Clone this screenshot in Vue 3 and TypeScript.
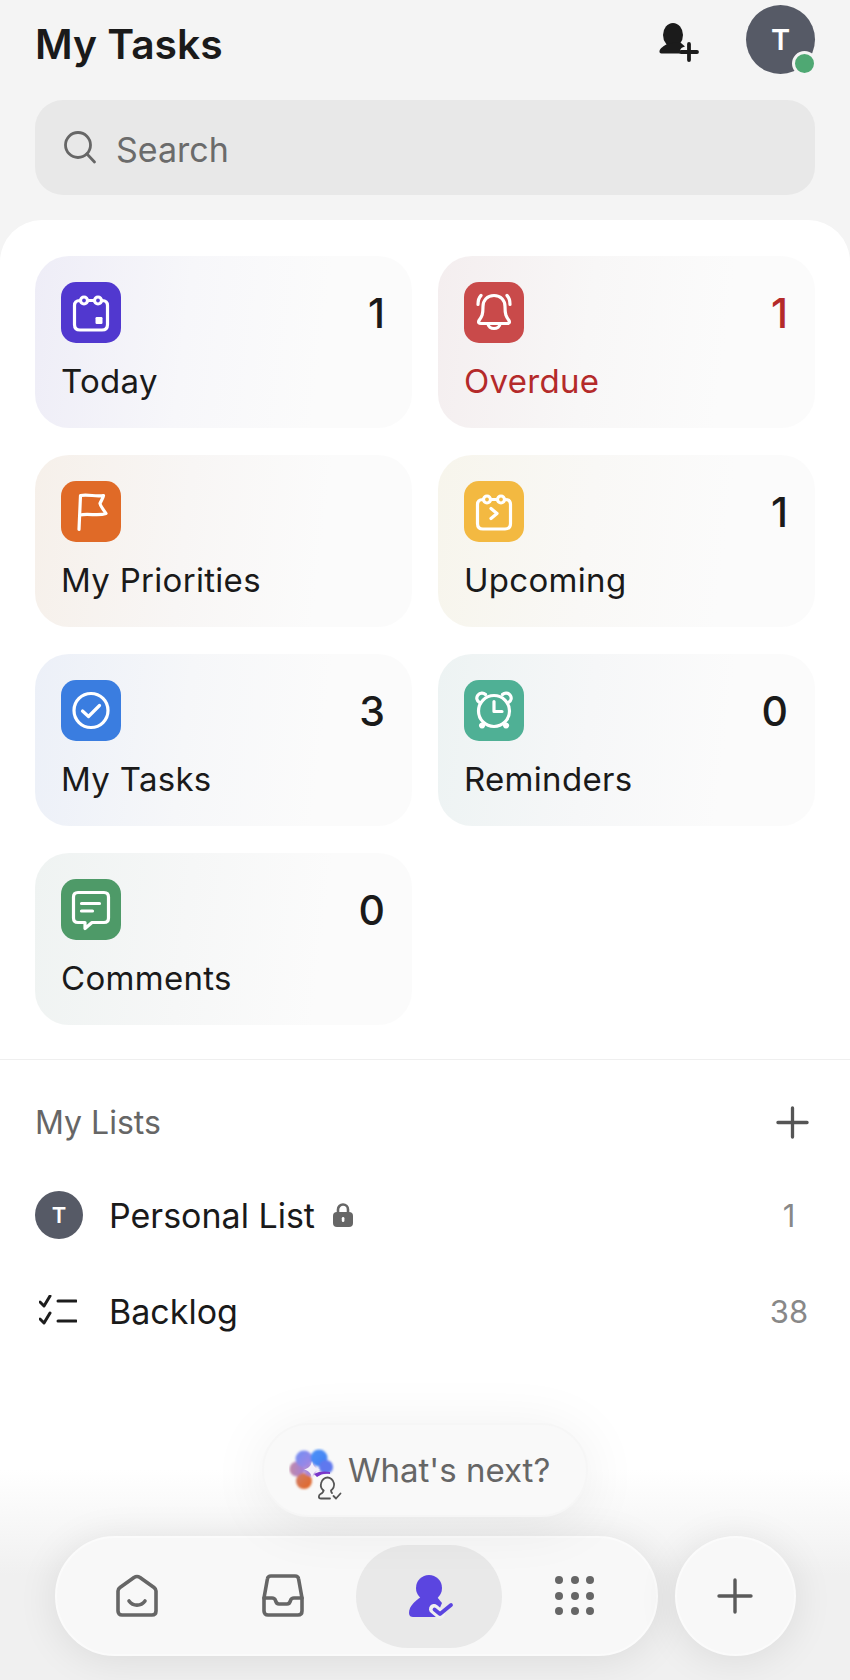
<template>
  <div class="page">
    <header class="top">
      <h1 class="title">My Tasks</h1>
      <svg class="add-user" viewBox="0 0 40 40" aria-hidden="true">
        <ellipse cx="14" cy="12" rx="10" ry="12" fill="#1b1b1b" />
        <path d="M8 21c-3 2-7 4-7.500 7-.3 1.500.5 2.500 2 2.500H21c-.5-4 1-6 5-7l-4-3.500-3-1z" fill="#1b1b1b" />
        <path d="M30 21v16M22 29h16" stroke="#1b1b1b" stroke-width="3.800" stroke-linecap="round" fill="none" />
      </svg>
      <div class="avatar">
        T
        <span class="status"></span>
      </div>
    </header>

    <div class="search">
      <svg class="search-icon" viewBox="0 0 34 34" aria-hidden="true">
        <circle cx="15" cy="14" r="12.500" />
        <path d="M24 23l7.500 8" />
      </svg>
      <span>Search</span>
    </div>

    <main class="sheet">
      <section class="cards">
        <article v-for="card in cards" :key="card.label" class="card" :class="[card.tint, { danger: card.danger }]">
          <div class="card-top">
            <div class="tile" :style="{ background: card.color }">
              <svg viewBox="0 0 60 60" aria-hidden="true">
                <path v-for="d in card.lines" :key="d" :d="d" />
                <rect v-if="card.dot" x="34.500" y="34.500" width="7" height="7" rx="1.200" class="dot" />
              </svg>
            </div>
            <span v-if="card.count !== null" class="count">{{ card.count }}</span>
          </div>
          <div class="label">{{ card.label }}</div>
        </article>
      </section>

      <section class="lists">
        <div class="lists-head">
          <span>My Lists</span>
          <svg class="lists-plus" viewBox="0 0 34 34" aria-hidden="true">
            <path d="M17 2v30M2 17h30" />
          </svg>
        </div>
        <div class="row">
          <div class="row-lead"><span class="mini-avatar">T</span></div>
          <span class="row-name">Personal List</span>
          <svg class="lock" viewBox="0 0 22 26" aria-hidden="true">
            <path d="M6 11V7.500a5 5 0 0 1 10 0V11" fill="none" stroke="#666" stroke-width="2.600" />
            <rect x="1" y="10" width="20" height="15" rx="4" fill="#666" />
            <rect x="9.800" y="15" width="2.600" height="5" rx="1.300" fill="#fff" />
          </svg>
          <span class="row-count">1</span>
        </div>
        <div class="row">
          <div class="row-lead">
            <svg class="checklist" viewBox="0 0 38 32" aria-hidden="true">
              <path d="M1 7l4 4 6-10M1 24l4 4 6-10" />
              <path d="M19 6h18M19 26h18" />
            </svg>
          </div>
          <span class="row-name">Backlog</span>
          <span class="row-count">38</span>
        </div>
      </section>
    </main>

    <div class="fade"></div>

    <div class="dock">
      <div class="ask">
        <svg class="ask-icon" viewBox="0 0 46 44" aria-hidden="true">
          <defs>
            <linearGradient id="blobLeft" x1="0" y1="0" x2="1" y2="1">
              <stop offset="0" stop-color="#6f8ff5" />
              <stop offset="1" stop-color="#a884e0" />
            </linearGradient>
            <linearGradient id="blobRight" x1="0" y1="0" x2="1" y2="1">
              <stop offset="0" stop-color="#4f93f8" />
              <stop offset="1" stop-color="#3f7ff2" />
            </linearGradient>
            <linearGradient id="blobWarm" x1="0" y1="0" x2="1" y2="1">
              <stop offset="0" stop-color="#cf7f6c" />
              <stop offset="1" stop-color="#e4641f" />
            </linearGradient>
            <linearGradient id="blobPink" x1="0" y1="0" x2="1" y2="0">
              <stop offset="0" stop-color="#c08aa8" />
              <stop offset="1" stop-color="#a57fd6" />
            </linearGradient>
            <filter id="soft" x="-20%" y="-20%" width="140%" height="140%"><feGaussianBlur stdDeviation="1.100" /></filter>
          </defs>
          <g filter="url(#soft)">
            <circle cx="8" cy="21" r="7.500" fill="url(#blobPink)" />
            <circle cx="15" cy="11" r="8.500" fill="url(#blobLeft)" />
            <circle cx="30" cy="10" r="8.500" fill="url(#blobRight)" />
            <circle cx="37" cy="19" r="7" fill="#5f78ee" />
            <circle cx="15" cy="33" r="8" fill="url(#blobWarm)" />
            <circle cx="21" cy="22" r="6" fill="#a98ad8" />
          </g>
          <path d="M25 26c5-3 11-3 16-2v2c-5-1-9 0-13 3z" fill="#7a35c9" />
          <path d="M23 13c1 5 3 7 8 8.500-5 1.500-7 3.500-8 8.500-1-5-3-7-8-8.500 5-1.500 7-3.500 8-8.500z" fill="#f3effa" />
        </svg>
        <svg class="ask-badge" viewBox="0 0 24 24" aria-hidden="true">
          <circle cx="10" cy="11" r="13" fill="#f9f9f9" />
          <path d="M6.500 14.500C4 12.500 3.500 10 4 7.500 4.700 3.500 8 1.500 10.500 1.500S16.300 3.500 17 7.500c.4 2.500-.5 5-3 7 0 1.500.5 2 1 2.500" />
          <path d="M6.500 14.500c0 1.500-1 2.500-3 3.500-2 1.200-2.500 4.500.5 4.500h9" />
          <path d="M16.500 20l2.500 2.500 4.500-5" />
        </svg>
        <span>What's next?</span>
      </div>

      <div class="dock-row">
        <nav class="nav">
          <a v-for="item in navItems" :key="item.name" class="nav-item" :class="{ active: item.active }">
            <svg v-if="item.name === 'home'" class="nav-icon" viewBox="0 0 44 44" aria-hidden="true">
              <path d="M3 17c0-1.500.7-2.500 2-3.400L19 3.500c2-1.300 4-1.300 6 0l14 10c1.300 1 2 2 2 3.500v20c0 2.500-1.500 4-4 4H7c-2.500 0-4-1.500-4-4z" />
              <path d="M14 27c4 5.500 12 5.500 16 0" />
            </svg>
            <svg v-else-if="item.name === 'inbox'" class="nav-icon" viewBox="0 0 44 44" aria-hidden="true">
              <path d="M10 2h24c2 0 3.300 1 3.600 3L41 24v13c0 2.500-1.500 4-4 4H7c-2.500 0-4-1.500-4-4V24L6.400 5C6.700 3 8 2 10 2z" />
              <path d="M3 24h8c2 0 3 1 3.500 2.500.5 2 1.500 3.500 3.500 3.500h8c2 0 3-1.500 3.500-3.500C30 25 31 24 33 24h8" />
            </svg>
            <svg v-else-if="item.name === 'mine'" class="nav-icon mine" viewBox="0 0 44 44" aria-hidden="true">
              <circle cx="22" cy="14" r="13" fill="#5b45e0" />
              <path d="M14 23C8 27 2 32 2 39c0 3 2 4 4 4h23l6-14-5-6z" fill="#5b45e0" />
              <path d="M27 35l6 5" class="mine-gap" />
              <path d="M27.500 35.500l5.500 4.500 11-9" class="mine-check" />
            </svg>
            <svg v-else class="nav-icon dots" viewBox="0 0 40 40" aria-hidden="true">
              <template v-for="y in [4, 20, 35]" :key="y">
                <circle v-for="x in [4, 20, 35]" :key="x" :cx="x" :cy="y" r="4" />
              </template>
            </svg>
          </a>
        </nav>
        <button class="fab" type="button" aria-label="Add">
          <svg viewBox="0 0 36 36" aria-hidden="true">
            <path d="M18 2v32M2 18h32" />
          </svg>
        </button>
      </div>
    </div>
  </div>
</template>

<script setup lang="ts">
interface Card {
  label: string;
  count: number | null;
  color: string;
  tint: string;
  lines: string[];
  dot?: boolean;
  danger?: boolean;
}

interface NavItem {
  name: string;
  active?: boolean;
}

// Calendar outline with two ring loops, shared by Today and Upcoming
const calendar = [
  "M19.500 18H19c-3.500 0-5.500 2-5.500 5v19c0 3.500 2 5.500 5.500 5.500h22c3.500 0 5.500-2 5.500-5.500V23c0-3-2-5-5.500-5h-.5M26.500 18h7",
  "M23 14.500a3.500 3.500 0 1 1 0 7 3.500 3.500 0 0 1 0-7z",
  "M37 14.500a3.500 3.500 0 1 1 0 7 3.500 3.500 0 0 1 0-7z",
];

const cards: Card[] = [
  {
    label: "Today",
    count: 1,
    color: "#5138cf",
    tint: "tint-violet",
    dot: true,
    lines: calendar,
  },
  {
    label: "Overdue",
    count: 1,
    color: "#c94a4a",
    tint: "tint-red",
    danger: true,
    lines: [
      "M30 13c-7 0-11 5-11 11 0 8-1 10-4 14-1 2 0 3 2 3h26c2 0 3-1 2-3-3-4-4-6-4-14 0-6-4-11-11-11z",
      "M24 41c0 3 3 5 6 5s6-2 6-5",
      "M14 22c0-4 1-7 3-9M46 22c0-4-1-7-3-9",
    ],
  },
  {
    label: "My Priorities",
    count: null,
    color: "#e06a27",
    tint: "tint-orange",
    lines: ["M18 48l1.500-34c8-1.500 15 1.500 23 0-.5 3.500-3 6-3.500 8 .5 3 3.500 6 6 10-8 3-17-.5-26 1.500"],
  },
  {
    label: "Upcoming",
    count: 1,
    color: "#f3b941",
    tint: "tint-yellow",
    lines: [...calendar, "M27 27l6 5-6 5"],
  },
  {
    label: "My Tasks",
    count: 3,
    color: "#3a7de0",
    tint: "tint-blue",
    lines: [
      "M30 13a17 17 0 1 0 0 34 17 17 0 0 0 0-34z",
      "M21.500 30.500l6 5.500 11-11",
    ],
  },
  {
    label: "Reminders",
    count: 0,
    color: "#4fb095",
    tint: "tint-teal",
    lines: [
      "M30 15a15.500 15.500 0 1 0 0 31 15.500 15.500 0 0 0 0-31z",
      "M30 21v10h8",
      "M15.500 22c-3-2-3.500-5-1.500-7.500s5.500-2.500 7.500-.5M44.500 22c3-2 3.500-5 1.500-7.500s-5.500-2.500-7.500-.5",
      "M18 43.500a1.500 1.500 0 1 0 .1 0zM42 43.500a1.500 1.500 0 1 0 .1 0z",
    ],
  },
  {
    label: "Comments",
    count: 0,
    color: "#4e9a68",
    tint: "tint-green",
    lines: [
      "M17 13h26c3 0 4.500 1.500 4.500 4.500v21c0 3-1.500 4.500-4.500 4.500H31l-7 6v-6h-7c-3 0-4.500-1.500-4.500-4.500v-21C12.500 14.500 14 13 17 13z",
      "M20.500 24h18M20.500 31.500h11",
    ],
  },
];

const navItems: NavItem[] = [
  { name: "home" },
  { name: "inbox" },
  { name: "mine", active: true },
  { name: "apps" },
];
</script>

<style>
html,
body {
  margin: 0;
  background: #fff;
}
</style>

<style scoped>
.page {
  position: relative;
  display: flex;
  flex-direction: column;
  width: 850px;
  height: 1680px;
  overflow: hidden;
  background: #f4f4f4;
  font-family: Inter, "Liberation Sans", sans-serif;
  color: #1a1a1a;
}

/* Cabecera */
.top {
  display: flex;
  align-items: flex-start;
  box-sizing: border-box;
  height: 79px;
  padding: 5px 35px 0;
}

.title {
  flex: 1;
  margin: 0;
  font-size: 40.800px;
  line-height: 78px;
  font-weight: 600;
}

.add-user {
  width: 40px;
  height: 40px;
  margin: 18px 47px 0 0;
}

.avatar {
  position: relative;
  display: flex;
  align-items: center;
  justify-content: center;
  width: 69px;
  height: 69px;
  border-radius: 50%;
  background: #565a66;
  color: #fff;
  font-size: 29px;
  font-weight: 600;
}

.status {
  position: absolute;
  right: -2px;
  bottom: -2px;
  width: 19px;
  height: 19px;
  border: 3px solid #f4f4f4;
  border-radius: 50%;
  background: #4fa873;
}

.search {
  display: flex;
  align-items: center;
  box-sizing: border-box;
  height: 95px;
  margin: 21px 35px 25px;
  padding: 4px 0 0 28px;
  border-radius: 28px;
  background: #e8e8e8;
  color: #6b6b6b;
  font-size: 34px;
}

.search-icon {
  width: 34px;
  height: 34px;
  margin: -3px 19px 0 0;
  fill: none;
  stroke: #666;
  stroke-width: 2.800;
  stroke-linecap: round;
}

.sheet {
  flex: 1;
  border-radius: 42px 42px 0 0;
  background: #fff;
}

/* Tarjetas */
.cards {
  display: grid;
  grid-template-columns: 1fr 1fr;
  grid-auto-rows: 172px;
  gap: 27px 26px;
  padding: 36px 35px 34px;
  border-bottom: 1px solid #efefef;
}

.card {
  padding: 26px 27px 0 26px;
  border-radius: 34px;
}

.tint-violet {
  background: linear-gradient(97deg, #eeedf7, #f7f7fa 40%, #fbfbfb 75%);
}
.tint-red {
  background: linear-gradient(97deg, #f4eeef, #f8f7f7 40%, #fbfbfb 75%);
}
.tint-orange {
  background: linear-gradient(97deg, #f6f0ea, #f8f6f5 40%, #fbfbfb 75%);
}
.tint-yellow {
  background: linear-gradient(97deg, #f7f5ec, #f9f8f6 40%, #fbfbfb 75%);
}
.tint-blue {
  background: linear-gradient(97deg, #ecf0f8, #f6f7f9 40%, #fbfbfb 75%);
}
.tint-teal {
  background: linear-gradient(97deg, #edf3f3, #f6f7f8 40%, #fbfbfb 75%);
}
.tint-green {
  background: linear-gradient(97deg, #eff3f2, #f6f7f7 40%, #fbfbfb 75%);
}

.card-top {
  display: flex;
  align-items: center;
  justify-content: space-between;
}

.tile {
  width: 60px;
  height: 61px;
  border-radius: 15px;
}

.tile svg {
  display: block;
  width: 60px;
  height: 61px;
  fill: none;
  stroke: #fff;
  stroke-width: 3.200;
  stroke-linecap: round;
  stroke-linejoin: round;
}

.tile .dot {
  fill: #fff;
  stroke: none;
}

.count {
  padding-top: 2px;
  font-size: 41px;
  font-weight: 500;
  line-height: 59px;
}

.label {
  margin-top: 18px;
  font-size: 33px;
  line-height: 40px;
  letter-spacing: 0.3px;
}

.danger .count,
.danger .label {
  color: #b42a2a;
}

/* Listas */
.lists {
  padding: 40px 35px 0;
}

.lists-head {
  display: flex;
  align-items: center;
  justify-content: space-between;
  height: 44px;
  margin-bottom: 23px;
  padding-right: 6px;
  color: #666;
  font-size: 32px;
}

.lists-plus {
  width: 33px;
  height: 33px;
  fill: none;
  stroke: #555;
  stroke-width: 3.400;
  stroke-linecap: round;
}

.row {
  display: flex;
  align-items: center;
  height: 96px;
  font-size: 34px;
}

.row-lead {
  display: flex;
  align-items: center;
  width: 74px;
}

.mini-avatar {
  display: flex;
  align-items: center;
  justify-content: center;
  width: 48px;
  height: 48px;
  border-radius: 50%;
  background: #565a66;
  color: #fff;
  font-size: 22px;
  font-weight: 600;
}

.checklist {
  width: 38px;
  height: 32px;
  margin-left: 4px;
  fill: none;
  stroke: #1d1d1d;
  stroke-width: 3;
  stroke-linecap: round;
  stroke-linejoin: round;
}

.lock {
  width: 22px;
  height: 26px;
  margin-left: 17px;
}

/* El número va centrado en una columna fija, como en la captura */
.row-count {
  width: 40px;
  margin-left: auto;
  margin-right: 6px;
  color: #888;
  font-size: 31px;
  text-align: center;
}

/* Barra inferior flotante */
.fade {
  position: absolute;
  right: 0;
  bottom: 0;
  left: 0;
  height: 210px;
  background: linear-gradient(rgba(240, 240, 240, 0), #f0f0f0 50%);
  pointer-events: none;
}

.dock {
  position: absolute;
  right: 0;
  bottom: 24px;
  left: 0;
  display: flex;
  flex-direction: column;
  align-items: center;
  gap: 19px;
}

.ask {
  position: relative;
  display: flex;
  align-items: center;
  box-sizing: border-box;
  width: 326px;
  height: 94px;
  padding-left: 25px;
  border: 2px solid #f6f6f6;
  border-radius: 47px;
  background: #f9f9f9;
  box-shadow: 0 6px 60px rgba(0, 0, 0, 0.07);
  color: #666;
  font-size: 33px;
}

.ask-icon {
  flex: none;
  width: 46px;
  height: 44px;
  margin-right: 13px;
}

.ask-badge {
  position: absolute;
  top: 51px;
  left: 53px;
  width: 24px;
  height: 24px;
  overflow: visible;
  fill: none;
  stroke: #555;
  stroke-width: 1.800;
  stroke-linecap: round;
  stroke-linejoin: round;
}

.ask-badge circle {
  stroke: none;
}

.dock-row {
  display: flex;
  gap: 17px;
}

.nav {
  display: flex;
  align-items: center;
  box-sizing: border-box;
  width: 603px;
  height: 120px;
  padding: 0 7px;
  border: 2px solid #fbfbfb;
  border-radius: 60px;
  background: #f8f8f8;
  box-shadow: 0 4px 40px rgba(0, 0, 0, 0.09);
}

.nav-item {
  display: flex;
  flex: 1;
  align-items: center;
  justify-content: center;
  height: 103px;
  border-radius: 52px;
}

.nav-item.active {
  background: #e9e9e9;
}

.nav-icon {
  width: 44px;
  height: 44px;
  overflow: visible;
  fill: none;
  stroke: #666;
  stroke-width: 3.600;
  stroke-linecap: round;
  stroke-linejoin: round;
}

.mine {
  stroke: none;
}

.mine-gap {
  stroke: #f0f0f0;
  stroke-width: 10;
}

.mine-check {
  stroke: #5b45e0;
  stroke-width: 3.800;
}

.dots {
  width: 40px;
  height: 40px;
  fill: #666;
  stroke: none;
}

.fab {
  display: flex;
  align-items: center;
  justify-content: center;
  box-sizing: border-box;
  width: 121px;
  height: 120px;
  padding: 0;
  border: 2px solid #fbfbfb;
  border-radius: 50%;
  background: #f8f8f8;
  box-shadow: 0 4px 40px rgba(0, 0, 0, 0.09);
}

.fab svg {
  width: 36px;
  height: 36px;
  fill: none;
  stroke: #5a5a5a;
  stroke-width: 3.400;
  stroke-linecap: round;
}
</style>
